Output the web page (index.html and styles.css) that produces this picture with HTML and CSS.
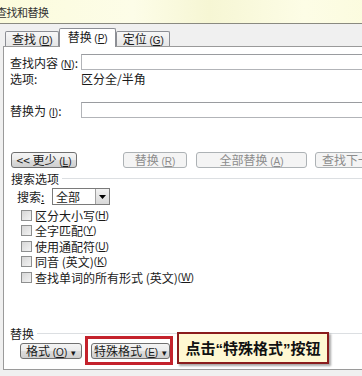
FILE: index.html
```html
<!DOCTYPE html>
<html lang="zh-CN">
<head>
    <meta charset="UTF-8">
    <title>查找和替换</title>
    <link rel="stylesheet" href="styles.css">
</head>
<body>
    <div class="window">
        <div class="titlebar"><span class="title">查找和替换</span></div>

        <div class="tabs">
            <div class="tab">查找 <span class="key">(<u>D</u>)</span></div>
            <div class="tab active">替换 <span class="key">(<u>P</u>)</span></div>
            <div class="tab">定位 <span class="key">(<u>G</u>)</span></div>
        </div>

        <div class="panel">
            <div class="field-row find-row">
                <span class="field-label">查找内容 <span class="key">(<u>N</u>)</span>:</span>
                <div class="textbox"></div>
            </div>
            <div class="field-row">
                <span class="field-label">选项:</span>
                <span>区分全/半角</span>
            </div>
            <div class="field-row replace-row">
                <span class="field-label">替换为 <span class="key">(<u>I</u>)</span>:</span>
                <div class="textbox"></div>
            </div>

            <div class="button-row">
                <button class="btn btn-less">&lt;&lt; 更少 <span class="key">(<u>L</u>)</span></button>
                <button class="btn btn-replace" disabled>替换 <span class="key">(<u>R</u>)</span></button>
                <button class="btn btn-all" disabled>全部替换 <span class="key">(<u>A</u>)</span></button>
                <button class="btn btn-next" disabled>查找下一处 <span class="key">(<u>F</u>)</span></button>
            </div>

            <div class="group-title first"><span>搜索选项</span></div>

            <div class="search-row">
                <span class="search-label">搜索<u>:</u></span>
                <div class="combo">
                    <span class="combo-value">全部</span>
                    <span class="combo-arrow">
                        <svg width="7" height="4" viewBox="0 0 7 4"><path d="M0 0h7L3.5 4z" fill="#000"/></svg>
                    </span>
                </div>
            </div>

            <ul class="checks">
                <li><span class="checkbox"></span>区分大小写 <span class="key">(<u>H</u>)</span></li>
                <li><span class="checkbox"></span>全字匹配 <span class="key">(<u>Y</u>)</span></li>
                <li><span class="checkbox"></span>使用通配符 <span class="key">(<u>U</u>)</span></li>
                <li><span class="checkbox"></span>同音 (英文) <span class="key">(<u>K</u>)</span></li>
                <li><span class="checkbox"></span>查找单词的所有形式 (英文) <span class="key">(<u>W</u>)</span></li>
            </ul>

            <div class="group-title"><span>替换</span></div>

            <div class="format-row">
                <button class="btn btn-format">格式 <span class="key">(<u>O</u>)</span> <span class="drop">&#9662;</span></button>
                <span class="highlight">
                    <button class="btn btn-special">特殊格式 <span class="key">(<u>E</u>)</span> <span class="drop">&#9662;</span></button>
                </span>
                <div class="callout">点击<span class="quote">“</span>特殊格式<span class="quote">”</span>按钮</div>
            </div>
        </div>
    </div>
</body>
</html>
```

FILE: styles.css
```css
body {
    margin: 0;
    background: #f0f0f0;
    font-family: "Noto Sans CJK SC", "Liberation Sans", sans-serif;
    font-size: 12px;
    color: #1a1a1a;
    overflow: hidden;
}

.window {
    width: 380px;
    height: 376px;
}

.titlebar {
    height: 23px;
    border-bottom: 1px solid #8a8a80;
    background: linear-gradient(90deg, #fbfbdc, #fdfde8 35%, #f6f6d4 55%, #fdfde6 80%, #fbfbdd);
    display: flex;
    align-items: center;
}

.title {
    margin-left: -4px;
    font-size: 11px;
    color: #333;
    letter-spacing: -0.5px;
}

.key {
    font-size: 10px;
    font-family: "Liberation Sans", sans-serif;
}

/* tabs */
.tabs {
    height: 22px;
    padding-left: 5px;
    display: flex;
    align-items: flex-end;
}

.tab {
    height: 14px;
    line-height: 14px;
    padding: 0 5px 0 6px;
    border: 1px solid #8c8e94;
    border-bottom: none;
    border-radius: 2px 2px 0 0;
    background: linear-gradient(#f7f7f7, #e6e6e6);
    white-space: nowrap;
}

.tab.active {
    position: relative;
    height: 18px;
    line-height: 15px;
    padding: 0 7px 0 8px;
    margin-bottom: -1px;
    background: #fff;
    z-index: 1;
}

/* panel */
.panel {
    margin-left: 3px;
    padding: 0 0 10px 6px;
    background: #fff;
    border: 1px solid #9a9a9a;
    border-right: none;
}

.field-row {
    display: flex;
    align-items: center;
    height: 16px;
    white-space: nowrap;
}

.find-row {
    margin-top: 7px;
}

.replace-row {
    margin-top: 16px;
}

.field-label {
    width: 71px;
    flex: none;
}

.textbox {
    flex: 1;
    height: 14px;
    border: 1px solid #b2b4b8;
    border-top-color: #9a9ca0;
    background: #fff;
}

/* buttons */
.btn {
    height: 16px;
    padding: 0;
    font-family: inherit;
    font-size: 12px;
    line-height: 14px;
    color: #1a1a1a;
    border: 1px solid #707070;
    border-radius: 3px;
    background: linear-gradient(#f4f4f4, #ebebeb 50%, #dddddd 51%, #cfcfcf);
    white-space: nowrap;
    flex: none;
}

.btn:disabled {
    color: #8c8c8c;
    border-color: #adb2b5;
    background: #f4f4f4;
}

.button-row {
    display: flex;
    margin-top: 34px;
}

.btn-less {
    width: 66px;
    margin-left: 1px;
}

.btn-replace {
    width: 64px;
    margin-left: 46px;
}

.btn-all {
    width: 111px;
    margin-left: 9px;
}

.btn-next {
    width: 80px;
    margin-left: 8px;
    text-align: left;
    padding-left: 6px;
}

/* groups */
.group-title {
    display: flex;
    align-items: center;
    height: 14px;
    margin-top: 41px;
}

.group-title.first {
    margin-top: 3px;
    margin-left: 1px;
}

.group-title::after {
    content: "";
    flex: 1;
    margin-left: 3px;
    border-top: 1px solid #dcdfe2;
}

.search-row {
    display: flex;
    align-items: center;
    height: 17px;
    margin-top: 3px;
    padding-left: 7px;
}

.search-label {
    width: 35px;
}

.combo {
    width: 56px;
    height: 15px;
    display: flex;
    border: 1px solid #7a7a7a;
    background: #fff;
}

.combo-value {
    flex: 1;
    line-height: 15px;
    padding-left: 3px;
}

.combo-arrow {
    width: 13px;
    display: flex;
    align-items: center;
    justify-content: center;
    border-left: 1px solid #a0a0a0;
    background: linear-gradient(#f2f2f2, #d8d8d8);
}

.checks {
    list-style: none;
    margin: 2.5px 0 0;
    padding: 0 0 0 11px;
}

.checks li {
    display: flex;
    align-items: center;
    height: 15.5px;
    white-space: nowrap;
}

.checkbox {
    width: 9px;
    height: 9px;
    margin-right: 3px;
    border: 1px solid #8e8f8f;
    background: linear-gradient(135deg, #d6d6d6, #f3f3f3);
}

.format-row {
    position: relative;
    display: flex;
    margin-top: 3px;
}

.btn-format {
    width: 62px;
    margin-left: 10px;
}

.drop {
    font-size: 9px;
    margin-left: 1px;
}

.highlight {
    position: relative;
    margin-left: 9px;
    display: flex;
}

.btn-special {
    width: 79px;
}

/* annotation drawn over the dialog */
.highlight::before {
    content: "";
    position: absolute;
    left: -6px;
    right: -3px;
    top: -7px;
    bottom: -6px;
    border: 3px solid #c4222c;
}

.callout {
    position: absolute;
    left: 167px;
    top: -11px;
    width: 148px;
    height: 28px;
    border: 2px solid #8a1c1c;
    background: #fff8d2;
    box-shadow: 2px 2px 2px rgba(0, 0, 0, 0.35);
    font-size: 15px;
    font-weight: bold;
    line-height: 28px;
    text-align: center;
    color: #111;
    white-space: nowrap;
}

.quote {
    font-family: "Liberation Sans", sans-serif;
}
```
